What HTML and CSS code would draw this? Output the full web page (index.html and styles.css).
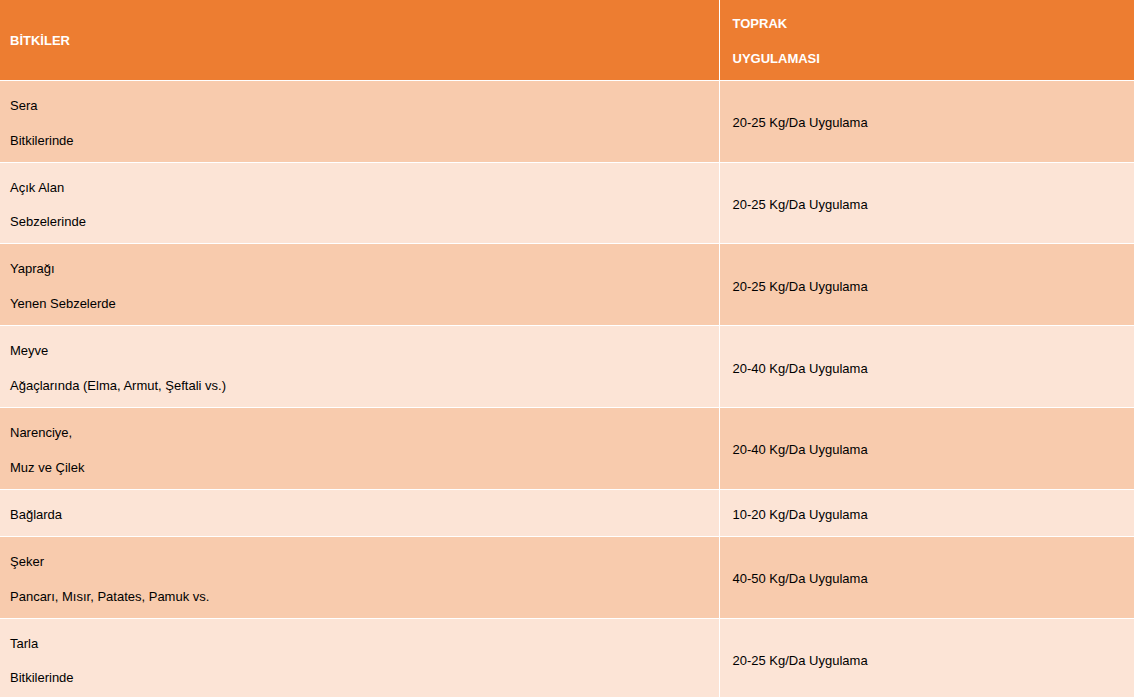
FILE: index.html
```html
<!DOCTYPE html>
<html lang="tr">
<head>
<meta charset="utf-8">
<title>Uygulama</title>
<link rel="stylesheet" href="styles.css">
</head>
<body>
<table class="dose-table">
  <colgroup><col class="col-plant"><col class="col-dose"></colgroup>
  <thead>
    <tr class="head-row">
      <th class="cell-plant head-single"><p>BİTKİLER</p></th>
      <th class="cell-dose"><p>TOPRAK</p><p>UYGULAMASI</p></th>
    </tr>
  </thead>
  <tbody>
    <tr class="row-dark">
      <td class="cell-plant"><p>Sera</p><p>Bitkilerinde</p></td>
      <td class="cell-dose"><p>20-25 Kg/Da Uygulama</p></td>
    </tr>
    <tr class="row-light">
      <td class="cell-plant"><p>Açık Alan</p><p>Sebzelerinde</p></td>
      <td class="cell-dose"><p>20-25 Kg/Da Uygulama</p></td>
    </tr>
    <tr class="row-dark">
      <td class="cell-plant"><p>Yaprağı</p><p>Yenen Sebzelerde</p></td>
      <td class="cell-dose"><p>20-25 Kg/Da Uygulama</p></td>
    </tr>
    <tr class="row-light">
      <td class="cell-plant"><p>Meyve</p><p>Ağaçlarında (Elma, Armut, Şeftali vs.)</p></td>
      <td class="cell-dose"><p>20-40 Kg/Da Uygulama</p></td>
    </tr>
    <tr class="row-dark">
      <td class="cell-plant"><p>Narenciye,</p><p>Muz ve Çilek</p></td>
      <td class="cell-dose"><p>20-40 Kg/Da Uygulama</p></td>
    </tr>
    <tr class="row-light">
      <td class="cell-plant"><p>Bağlarda</p></td>
      <td class="cell-dose"><p>10-20 Kg/Da Uygulama</p></td>
    </tr>
    <tr class="row-dark">
      <td class="cell-plant"><p>Şeker</p><p>Pancarı, Mısır, Patates, Pamuk vs.</p></td>
      <td class="cell-dose"><p>40-50 Kg/Da Uygulama</p></td>
    </tr>
    <tr class="row-light">
      <td class="cell-plant"><p>Tarla</p><p>Bitkilerinde</p></td>
      <td class="cell-dose"><p>20-25 Kg/Da Uygulama</p></td>
    </tr>
  </tbody>
</table>
</body>
</html>
```

FILE: styles.css
```css
html, body {
  margin: 0;
  padding: 0;
  background: #ffffff;
}

body {
  font-family: "Liberation Sans", Arial, sans-serif;
  font-size: 13px;
  color: #000000;
  overflow: hidden;
}

.dose-table {
  width: 1134px;
  border-collapse: collapse;
  table-layout: fixed;
}

.col-plant { width: 719px; }
.col-dose { width: 415px; }

.dose-table th,
.dose-table td {
  border: 1px solid #ffffff;
  text-align: left;
  vertical-align: middle;
  padding: 17px 10px 14px 10px;
}

.dose-table tr > :first-child { border-left: 0; }
.dose-table tr > :last-child { border-right: 0; }
.dose-table thead th { border-top: 0; }

.dose-table p {
  margin: 0;
  line-height: 15px;
}

.dose-table p + p {
  margin-top: 19.8px;
}

.dose-table .cell-dose {
  padding-left: 13px;
}

.head-row th {
  background: #ed7d31;
  color: #ffffff;
  font-weight: bold;
  padding-top: 16px;
  padding-bottom: 15px;
}

.head-row .cell-dose {
  padding-top: 16px;
  padding-bottom: 14px;
}

.row-dark td { background: #f8cbad; }
.row-light td { background: #fce4d6; }
```
